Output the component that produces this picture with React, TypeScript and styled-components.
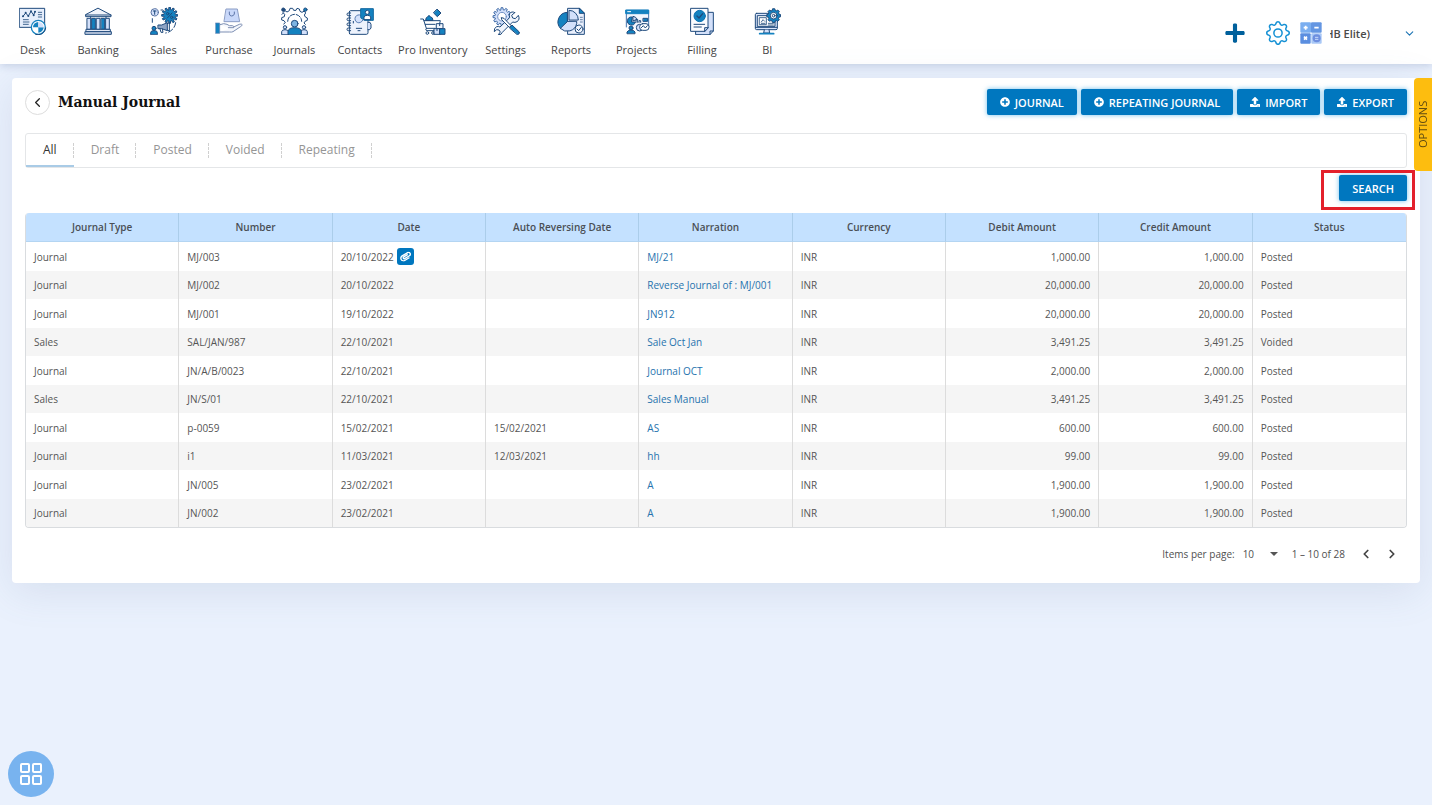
import React from "react";
import styled, { createGlobalStyle, css } from "styled-components";
import { FaPlus, FaPlusCircle, FaUpload, FaPaperclip } from "react-icons/fa";
import { BsGear } from "react-icons/bs";
import { ChevronDown, ChevronLeft, ChevronRight } from "lucide-react";

const NAVY = "#1f4a7c";
const BLUE = "#1482c0";
const PALE = "#d3e0fa";

const GlobalStyle = createGlobalStyle`
  * { box-sizing: border-box; }
  body {
    margin: 0;
    min-height: 100vh;
    background: #eaf1fd;
    color: #4d4d4d;
    font-family: "Open Sans", "Noto Sans", sans-serif;
    font-size: 11px;
  }
  button, select { font: inherit; color: inherit; }
`;

/* ---------- icons ---------- */

function gearPath(cx: number, cy: number, outer: number, inner: number, teeth: number) {
  const points: string[] = [];
  const step = (Math.PI * 2) / teeth;
  for (let i = 0; i < teeth; i++) {
    const a = i * step - Math.PI / 2;
    const corners: [number, number][] = [
      [a - step * 0.32, inner],
      [a - step * 0.2, outer],
      [a + step * 0.2, outer],
      [a + step * 0.32, inner],
    ];
    corners.forEach(([t, r]) =>
      points.push(`${(cx + r * Math.cos(t)).toFixed(1)} ${(cy + r * Math.sin(t)).toFixed(1)}`)
    );
  }
  return `M${points.join("L")}Z`;
}

const NavSvg = styled.svg.attrs({ viewBox: "0 0 84 84", "aria-hidden": true })`
  display: block;
  width: 28px;
  height: 28px;
  fill: none;
  stroke: ${NAVY};
  stroke-width: 3;
  stroke-linejoin: round;
  stroke-linecap: round;
`;

const DeskIcon = () => (
  <NavSvg>
    <rect x="2" y="4" width="75" height="57" fill="#e6eefc" />
    <path d="M12 28L20 18L28 27L36 13L44 24L48 14" />
    <g fill={NAVY} stroke="none">
      <circle cx="12" cy="28" r="3" /><circle cx="20" cy="17" r="3" /><circle cx="28" cy="27" r="3" />
      <circle cx="36" cy="13" r="3" /><circle cx="44" cy="25" r="3" /><circle cx="48" cy="14" r="3" />
    </g>
    <path d="M58 16H68M58 23H68M58 30H68M13 38H28M13 45H30M13 52H28" strokeWidth="2.5" />
    <circle cx="58" cy="61" r="21" fill="#fff" stroke={BLUE} strokeWidth="4" />
    <path d="M58 61V45A16 16 0 0 0 42 61ZM58 61V77A16 16 0 0 0 74 61Z" fill={BLUE} stroke="none" />
    <path d="M58 61V45A16 16 0 0 1 74 61Z" fill={PALE} stroke="none" />
    <path d="M80 63A22 22 0 0 1 50 82" />
  </NavSvg>
);

const BankingIcon = () => (
  <NavSvg>
    <path d="M43 4L81 24V29H5V24Z" fill="#f1f4fb" />
    <path d="M5 24H81M20 29V34M66 29V34" />
    <rect x="10" y="34" width="10" height="33" fill={PALE} />
    <rect x="24" y="34" width="10" height="33" fill={BLUE} />
    <rect x="38" y="34" width="10" height="33" fill={PALE} />
    <rect x="52" y="34" width="10" height="33" fill={BLUE} />
    <rect x="66" y="34" width="10" height="33" fill={PALE} />
    <rect x="7" y="67" width="72" height="7" fill="#e4eaf6" />
    <rect x="4" y="74" width="78" height="8" fill="#c5d0e4" />
  </NavSvg>
);

const SalesIcon = () => (
  <NavSvg>
    <path d={gearPath(59, 25, 24, 17, 12)} fill={BLUE} />
    <path d="M52 33L66 18" />
    <circle cx="53" cy="20" r="3.5" /><circle cx="65" cy="31" r="3.5" />
    <circle cx="14" cy="16" r="11" fill={PALE} stroke="#5570a0" />
    <path d="M10 12H18M14 12V22" />
    <path d="M33 9H38M7 35V46M77 47A36 36 0 0 1 47 78" strokeDasharray="15 7" />
    <path d="M25 54H35L52 47V71L35 65H25Z" fill="#8ea4c4" />
    <path d="M52 50L58 47V72L52 69M30 66L33 76H39L37 66" />
    <circle cx="12" cy="64" r="6" fill={BLUE} />
    <path d="M2 82V77Q3 71 9 71H16Q22 72 22 77V82Z" fill={BLUE} />
  </NavSvg>
);

const PurchaseIcon = () => (
  <NavSvg>
    <path d="M34 6H67L74 44H28Z" fill="#c9d8fa" stroke="#8a9cc4" />
    <path d="M43 15V21Q44 27 50 27T58 21V15" stroke="#5c74a8" />
    <path d="M15 53Q27 47 36 52L43 56H52Q58 57 56 62H40M56 60L73 52Q80 49 82 54Q79 58 69 64L54 74Q50 76 44 75H15" fill="#f5f7fc" stroke="#7e90b4" />
    <rect x="2" y="48" width="12" height="31" fill={BLUE} stroke="#6783b2" strokeWidth="2" />
  </NavSvg>
);

const JournalsIcon = () => (
  <NavSvg>
    <path
      d="M11 51L16 47L12 41L5 39V32L13 29L14 22L9 17L15 11L21 15L28 11L30 4H38L41 10L48 10L51 4L58 6L60 13L66 16L73 12L77 18L73 24L76 30L82 33V40L75 43L72 48L76 52"
    />
    <path d="M23 43A21 21 0 0 1 65 43" strokeDasharray="14 5" />
    <path d="M6 22L10 18M75 9L70 13" />
    <circle cx="10" cy="8" r="5" fill={NAVY} /><circle cx="76" cy="8" r="5" fill={BLUE} />
    <circle cx="15" cy="61" r="5" fill={PALE} /><circle cx="72" cy="61" r="5" fill={PALE} />
    <path d="M5 82V74Q6 68 15 68T26 74V82ZM61 82V74Q62 68 72 68T82 74V82Z" fill={PALE} />
    <path d="M24 82V72Q27 62 44 62T64 72V82Z" fill={BLUE} />
    <circle cx="44" cy="50" r="10" fill="#7db4e2" />
  </NavSvg>
);

const ContactsIcon = () => (
  <NavSvg>
    <path d="M46 11H14Q10 11 10 15V78Q10 82 14 82H61Q66 82 66 77V40" fill="#eef3fd" />
    <path d="M66 46H72L75 52V63L71 68H66" fill={PALE} />
    <path d="M14 18H7Q3 18 3 22T7 26H14M14 33H7Q3 33 3 37T7 41H14M14 48H7Q3 48 3 52T7 56H14M14 63H7Q3 63 3 67T7 71H14" />
    <path d="M45 25A12 12 0 1 0 50 40" fill={PALE} stroke="#5b7fb4" />
    <path d="M31 64H47M36 71H42M22 43V48" />
    <path d="M45 5H82V40H55L45 33Z" fill={BLUE} stroke="#12689f" />
    <circle cx="64" cy="16" r="6" fill="#fff" />
    <path d="M54 37V30Q55 25 64 25T74 30V37Z" fill="#fff" />
  </NavSvg>
);

const InventoryIcon = () => (
  <NavSvg>
    <path d="M55 7L66 18L55 29L44 18Z" fill={BLUE} />
    <path d="M20 39Q20 31 26 29Q30 22 34 29Q42 31 42 39Z" fill={BLUE} />
    <path d="M5 36H13L22 64H48M15 41H64L61 53M19 52H48" />
    <path d="M22 64Q17 70 24 71H46" />
    <circle cx="25" cy="78" r="4" /><circle cx="42" cy="78" r="4" />
    <rect x="53" y="50" width="19" height="15" fill="#f0f4fc" />
    <rect x="46" y="65" width="17" height="17" fill={PALE} />
    <rect x="63" y="65" width="15" height="17" fill={BLUE} />
    <path d="M62 50V56M54 65V71" />
  </NavSvg>
);

const SettingsIcon = () => (
  <NavSvg>
    <path d={gearPath(30, 29, 27, 21, 12)} fill={PALE} stroke="#3f6ba8" />
    <circle cx="30" cy="29" r="13" fill="#fff" stroke="#6f90c4" />
    <path d="M68 17L59 25L62 33L70 35L79 25Q85 38 75 44Q69 48 62 45L31 76Q29 84 19 83L25 75L21 69L14 68L7 74Q5 63 14 59Q19 57 24 60L53 32Q49 17 60 15Q64 14 68 17Z" fill="#f0f4fc" />
    <path d="M29 32L36 34L57 56L52 61L30 39Z" fill="#fff" />
    <path d="M53 62L60 54L82 75Q84 81 77 83Z" fill={BLUE} />
  </NavSvg>
);

const ReportsIcon = () => (
  <NavSvg>
    <path d="M33 4H67L82 19V82H33Z" fill="#e9effc" />
    <path d="M67 4V19H82Z" fill={BLUE} />
    <path d="M31 44V16A29 29 0 0 0 10 64Z" fill={BLUE} />
    <path d="M31 44L10 64A29 29 0 0 0 59 50V44Z" fill={PALE} />
    <path d="M36 38V10A28 28 0 0 1 64 38Z" fill={PALE} />
    <path d="M70 31H76M70 38H76M70 45H76" strokeWidth="2" />
    <circle cx="66" cy="66" r="12" fill="#f5f8fe" />
    <path d="M60 66L65 71L73 61" />
  </NavSvg>
);

const ProjectsIcon = () => (
  <NavSvg>
    <path d="M10 60V10H77V60" fill="#f3f7fe" stroke="#4273ad" />
    <path d="M9 9H77V20H9Z" fill={BLUE} stroke={BLUE} />
    <path d="M14 14H23" stroke="#fff" />
    <path d="M27 30A12 12 0 1 0 37 45H27Z" fill={BLUE} />
    <path d="M31 28A13 13 0 0 1 42 38L31 41Z" fill={PALE} />
    <path d="M39 46V37H44V46M48 46V41H53V46" />
    <rect x="61" y="34" width="13" height="9" fill={BLUE} />
    <circle cx="50" cy="62" r="10" fill={PALE} />
    <rect x="50" y="50" width="28" height="20" rx="9" fill="#fff" />
    <path d="M55 62L61 56L67 63L73 56" />
    <circle cx="24" cy="63" r="6" fill={BLUE} />
    <path d="M12 79V75Q15 69 24 69T36 75V79Z" fill={BLUE} />
  </NavSvg>
);

const FillingIcon = () => (
  <NavSvg>
    <path d="M24 16H76V72L66 83H24Z" fill={PALE} />
    <path d="M76 72H66V83" />
    <path d="M9 4H60V62L50 73H9Z" fill="#fbfcff" />
    <path d="M60 62H50V73Z" fill={PALE} />
    <circle cx="35" cy="27" r="17" fill={BLUE} stroke="#0f72b2" />
    <path d="M27 27L33 33L44 20" strokeWidth="4" />
    <path d="M18 52H50M18 60H40" />
  </NavSvg>
);

const BiIcon = () => (
  <NavSvg>
    <rect x="7" y="19" width="66" height="49" rx="4" fill="#dbe6fb" />
    <rect x="14" y="26" width="52" height="32" fill="#fff" />
    <path d="M8 61H72" />
    <path d="M20 32H40V53H20ZM25 45L30 38L35 43M25 49H36M46 49H61M46 54H61" strokeWidth="2.5" />
    <path d="M34 68L32 78H50L48 68" fill={PALE} />
    <path d="M20 80H62" strokeWidth="5" stroke={BLUE} />
    <path d={gearPath(62, 26, 21, 17, 8)} fill={BLUE} />
    <circle cx="62" cy="26" r="10" fill="#fff" />
    <circle cx="62" cy="26" r="4" />
  </NavSvg>
);

const CalculatorIcon = () => (
  <svg width="22" height="22" viewBox="0 0 66 66" aria-hidden="true">
    <rect x="1" y="1" width="32" height="31" rx="3" fill="#7aaef0" />
    <rect x="33" y="1" width="32" height="31" rx="3" fill="#6496e2" />
    <rect x="1" y="34" width="31" height="31" rx="3" fill="#5a8ee0" />
    <rect x="34" y="34" width="31" height="31" rx="3" fill="#a9c8f6" />
    <path d="M11 17H23M17 11V23M43 17H56M12 44L21 53M21 44L12 53" stroke="#fff" strokeWidth="5" />
    <circle cx="50" cy="49" r="12" fill="#6e8fdf" />
    <path d="M45 46H55M45 52H55" stroke="#c8dafa" strokeWidth="3" />
  </svg>
);

/* ---------- header ---------- */

const Header = styled.header`
  display: flex;
  justify-content: space-between;
  height: 64px;
  background: #fff;
  box-shadow: 0 2px 8px rgba(70, 90, 140, 0.22);
`;

const Nav = styled.nav`
  display: flex;
  flex: 0 1 800px;
`;

const NavItem = styled.a<{ $wide?: boolean }>`
  display: flex;
  flex: 1 1 ${(p) => (p.$wide ? 80 : 65)}px;
  flex-direction: column;
  align-items: center;
  gap: 7px;
  padding-top: 7px;
  color: #444;
  font-size: 11px;
  font-weight: 500;
  line-height: 16px;
  text-decoration: none;
  white-space: nowrap;
`;

const HeaderTools = styled.div`
  display: flex;
  align-items: center;
  padding: 2px 16px 0 0;
`;

const IconButton = styled.button`
  display: flex;
  align-items: center;
  justify-content: center;
  padding: 0;
  border: 0;
  background: none;
  cursor: pointer;
`;

const AddButton = styled(IconButton)`
  margin-right: 20px;
  color: #00609c;
`;

const GearButton = styled(IconButton)`
  margin-right: 10px;
  color: #1490d4;
`;

const Company = styled(IconButton)`
  gap: 33px;
  margin-left: 8px;
  color: #1c74b4;
`;

const CompanyName = styled.span`
  display: flex;
  justify-content: flex-end;
  width: 40px;
  overflow: hidden;
  color: #4a4a4a;
  font-size: 11px;
  font-weight: 600;
  white-space: nowrap;
`;

/* ---------- page ---------- */

const Main = styled.main`
  padding: 14px 12px;
`;

const Card = styled.section`
  padding: 10px 13px 13px;
  border-radius: 4px;
  background: #fff;
  box-shadow: 0 8px 40px rgba(90, 110, 150, 0.14);
`;

const TitleBar = styled.div`
  display: flex;
  align-items: center;
  gap: 4px;
  height: 28px;
`;

const BackButton = styled(IconButton)`
  width: 25px;
  height: 25px;
  border: 1px solid #ddd;
  border-radius: 50%;
  color: #222;
`;

const Title = styled.h1`
  flex: 1;
  margin: 0 0 0 4px;
  color: #111;
  font-family: "DejaVu Serif", serif;
  font-size: 14px;
  font-weight: 700;
`;

const Button = styled.button`
  display: flex;
  align-items: center;
  gap: 5px;
  height: 26px;
  padding: 0 13px;
  border: 0;
  border-radius: 2px;
  background: #0077bf;
  box-shadow: 0 0 5px rgba(0, 140, 220, 0.55);
  color: #fff;
  font-size: 11px;
  font-weight: 600;
  cursor: pointer;
`;

const Tabs = styled.div`
  display: flex;
  align-items: stretch;
  height: 35px;
  margin-top: 17px;
  border: 1px solid #e4e6e8;
  border-radius: 3px;
`;

const Tab = styled.button<{ $active?: boolean }>`
  position: relative;
  padding: 0 17px;
  border: 0;
  border-bottom: 2px solid ${(p) => (p.$active ? "#a9cbe6" : "transparent")};
  background: none;
  color: ${(p) => (p.$active ? "#333" : "#959595")};
  font-size: 12px;
  font-weight: 500;
  cursor: pointer;

  &::after {
    content: "";
    position: absolute;
    top: 9px;
    right: 0;
    height: 15px;
    border-right: 1px dashed #d0d0d0;
  }
`;

const SearchRow = styled.div`
  display: flex;
  justify-content: flex-end;
  height: 45px;
  padding-top: 7px;
`;

const SearchSpot = styled.div`
  position: relative;
  height: 26px;

  &::after {
    content: "";
    position: absolute;
    inset: -5px -8px -9px -18px;
    border: 3px solid #e3202b;
    pointer-events: none;
  }
`;

const TableFrame = styled.div`
  overflow: hidden;
  border: 1px solid #d9dcdf;
  border-top: 0;
  border-radius: 4px;
`;

const Table = styled.table`
  width: 100%;
  border-collapse: separate;
  border-spacing: 0;
  table-layout: fixed;
  font-size: 10px;
  line-height: 16px;
`;

const HeadCell = styled.th`
  height: 29px;
  padding: 0 8px;
  border-right: 1px solid #abcdea;
  border-bottom: 1px solid #b4d5f2;
  background: #c4e1ff;
  color: #4a4f55;
  font-weight: 600;

  &:last-child { border-right: 0; }
`;

const Row = styled.tr`
  height: 28px;

  &:nth-child(odd) { height: 29px; }
  &:nth-child(even) { background: #f5f5f5; }
`;

const Cell = styled.td<{ $right?: boolean }>`
  padding: 0 8px;
  border-right: 1px solid #dcdcdc;
  color: #555;
  text-align: ${(p) => (p.$right ? "right" : "left")};
  white-space: nowrap;

  &:last-child { border-right: 0; }
`;

const DateLine = styled.div`
  display: flex;
  align-items: center;
  gap: 3px;
`;

const Attachment = styled(IconButton)`
  width: 17px;
  height: 17px;
  border-radius: 3px;
  background: #0077bf;
  color: #fff;

  svg { transform: rotate(15deg); }
`;

const NarrationLink = styled.a`
  color: #2673ae;
  text-decoration: none;
`;

const Pager = styled.div`
  display: flex;
  align-items: center;
  justify-content: flex-end;
  height: 42px;
  padding: 9px 7px 0 0;
  color: #505050;
  font-size: 10px;
`;

const PageSize = styled.label`
  display: flex;
  align-items: center;
  gap: 8px;
  margin-right: 14px;
`;

const PageRange = styled.span`
  margin-right: 3px;
`;

const SelectWrap = styled.span`
  position: relative;
  display: flex;
  width: 35px;

  &::after {
    content: "";
    position: absolute;
    top: 6px;
    right: 0;
    border: 4px solid transparent;
    border-top-color: #555;
    border-bottom: 0;
    pointer-events: none;
  }
`;

const Select = styled.select`
  width: 100%;
  padding: 0;
  border: 0;
  appearance: none;
  background: none;
  line-height: 16px;
`;

const PageButton = styled(IconButton)`
  width: 16px;
  height: 16px;
  margin-left: 10px;
  color: #444;
`;

const floating = css`
  position: fixed;
  border: 0;
  cursor: pointer;
`;

const OptionsTab = styled.button`
  ${floating}
  top: 78px;
  right: 0;
  width: 18px;
  height: 93px;
  padding: 0;
  border-radius: 0 4px 4px 0;
  background: #fdbd0f;
  color: #5f4b12;
  font-size: 11px;
  line-height: 18px;
  writing-mode: vertical-rl;
  transform: rotate(180deg);
`;

const AppsButton = styled.button`
  ${floating}
  left: 8px;
  bottom: 8px;
  display: flex;
  align-items: center;
  justify-content: center;
  width: 46px;
  height: 46px;
  padding: 0;
  border-radius: 50%;
  background: #78b3ef;
`;

/* ---------- data ---------- */

const navItems: { label: string; Icon: React.FC; wide?: boolean }[] = [
  { label: "Desk", Icon: DeskIcon },
  { label: "Banking", Icon: BankingIcon },
  { label: "Sales", Icon: SalesIcon },
  { label: "Purchase", Icon: PurchaseIcon },
  { label: "Journals", Icon: JournalsIcon },
  { label: "Contacts", Icon: ContactsIcon },
  { label: "Pro Inventory", Icon: InventoryIcon, wide: true },
  { label: "Settings", Icon: SettingsIcon },
  { label: "Reports", Icon: ReportsIcon },
  { label: "Projects", Icon: ProjectsIcon },
  { label: "Filling", Icon: FillingIcon },
  { label: "BI", Icon: BiIcon },
];

const columns = [
  "Journal Type", "Number", "Date", "Auto Reversing Date", "Narration",
  "Currency", "Debit Amount", "Credit Amount", "Status",
];

interface Journal {
  type: string;
  number: string;
  date: string;
  reversing?: string;
  narration: string;
  amount: string;
  status: string;
  attachment?: boolean;
}

const journals: Journal[] = [
  { type: "Journal", number: "MJ/003", date: "20/10/2022", narration: "MJ/21", amount: "1,000.00", status: "Posted", attachment: true },
  { type: "Journal", number: "MJ/002", date: "20/10/2022", narration: "Reverse Journal of : MJ/001", amount: "20,000.00", status: "Posted" },
  { type: "Journal", number: "MJ/001", date: "19/10/2022", narration: "JN912", amount: "20,000.00", status: "Posted" },
  { type: "Sales", number: "SAL/JAN/987", date: "22/10/2021", narration: "Sale Oct Jan", amount: "3,491.25", status: "Voided" },
  { type: "Journal", number: "JN/A/B/0023", date: "22/10/2021", narration: "Journal OCT", amount: "2,000.00", status: "Posted" },
  { type: "Sales", number: "JN/S/01", date: "22/10/2021", narration: "Sales Manual", amount: "3,491.25", status: "Posted" },
  { type: "Journal", number: "p-0059", date: "15/02/2021", reversing: "15/02/2021", narration: "AS", amount: "600.00", status: "Posted" },
  { type: "Journal", number: "i1", date: "11/03/2021", reversing: "12/03/2021", narration: "hh", amount: "99.00", status: "Posted" },
  { type: "Journal", number: "JN/005", date: "23/02/2021", narration: "A", amount: "1,900.00", status: "Posted" },
  { type: "Journal", number: "JN/002", date: "23/02/2021", narration: "A", amount: "1,900.00", status: "Posted" },
];

const tabs = ["All", "Draft", "Posted", "Voided", "Repeating"];

export default function App() {
  const [active, setActive] = React.useState("All");

  return (
    <>
      <GlobalStyle />
      <Header>
        <Nav>
          {navItems.map(({ label, Icon, wide }) => (
            <NavItem key={label} href="#" $wide={wide}>
              <Icon />
              {label}
            </NavItem>
          ))}
        </Nav>
        <HeaderTools>
          <AddButton aria-label="Add"><FaPlus size={22} /></AddButton>
          <GearButton aria-label="Preferences"><BsGear size={24} /></GearButton>
          <CalculatorIcon />
          <Company>
            <CompanyName>HB Elite)</CompanyName>
            <ChevronDown size={13} />
          </Company>
        </HeaderTools>
      </Header>

      <Main>
        <Card>
          <TitleBar>
            <BackButton aria-label="Back"><ChevronLeft size={15} /></BackButton>
            <Title>Manual Journal</Title>
            <Button><FaPlusCircle size={10} />JOURNAL</Button>
            <Button><FaPlusCircle size={10} />REPEATING JOURNAL</Button>
            <Button><FaUpload size={10} />IMPORT</Button>
            <Button><FaUpload size={10} />EXPORT</Button>
          </TitleBar>

          <Tabs role="tablist">
            {tabs.map((tab) => (
              <Tab
                key={tab}
                role="tab"
                aria-selected={tab === active}
                $active={tab === active}
                onClick={() => setActive(tab)}
              >
                {tab}
              </Tab>
            ))}
          </Tabs>

          <SearchRow>
            <SearchSpot>
              <Button>SEARCH</Button>
            </SearchSpot>
          </SearchRow>

          <TableFrame>
            <Table>
              <thead>
                <tr>
                  {columns.map((column) => (
                    <HeadCell key={column} scope="col">{column}</HeadCell>
                  ))}
                </tr>
              </thead>
              <tbody>
                {journals.map((j) => (
                  <Row key={j.number}>
                    <Cell>{j.type}</Cell>
                    <Cell>{j.number}</Cell>
                    <Cell>
                      <DateLine>
                        {j.date}
                        {j.attachment && (
                          <Attachment aria-label="Attachment"><FaPaperclip size={11} /></Attachment>
                        )}
                      </DateLine>
                    </Cell>
                    <Cell>{j.reversing}</Cell>
                    <Cell><NarrationLink href="#">{j.narration}</NarrationLink></Cell>
                    <Cell>INR</Cell>
                    <Cell $right>{j.amount}</Cell>
                    <Cell $right>{j.amount}</Cell>
                    <Cell>{j.status}</Cell>
                  </Row>
                ))}
              </tbody>
            </Table>
          </TableFrame>

          <Pager>
            <PageSize>
              Items per page:
              <SelectWrap>
                <Select defaultValue="10">
                  <option>10</option>
                  <option>25</option>
                  <option>50</option>
                </Select>
              </SelectWrap>
            </PageSize>
            <PageRange>1 – 10 of 28</PageRange>
            <PageButton aria-label="Previous page"><ChevronLeft size={14} strokeWidth={3} /></PageButton>
            <PageButton aria-label="Next page"><ChevronRight size={14} strokeWidth={3} /></PageButton>
          </Pager>
        </Card>
      </Main>

      <OptionsTab>OPTIONS</OptionsTab>
      <AppsButton aria-label="Apps">
        <svg width="24" height="24" viewBox="0 0 24 24" fill="none" stroke="#fff" strokeWidth="2" aria-hidden="true">
          <rect x="2" y="2" width="8" height="8" rx="1" />
          <rect x="14" y="2" width="8" height="8" rx="1" />
          <rect x="2" y="14" width="8" height="8" rx="1" />
          <rect x="14" y="14" width="8" height="8" rx="1" />
        </svg>
      </AppsButton>
    </>
  );
}
